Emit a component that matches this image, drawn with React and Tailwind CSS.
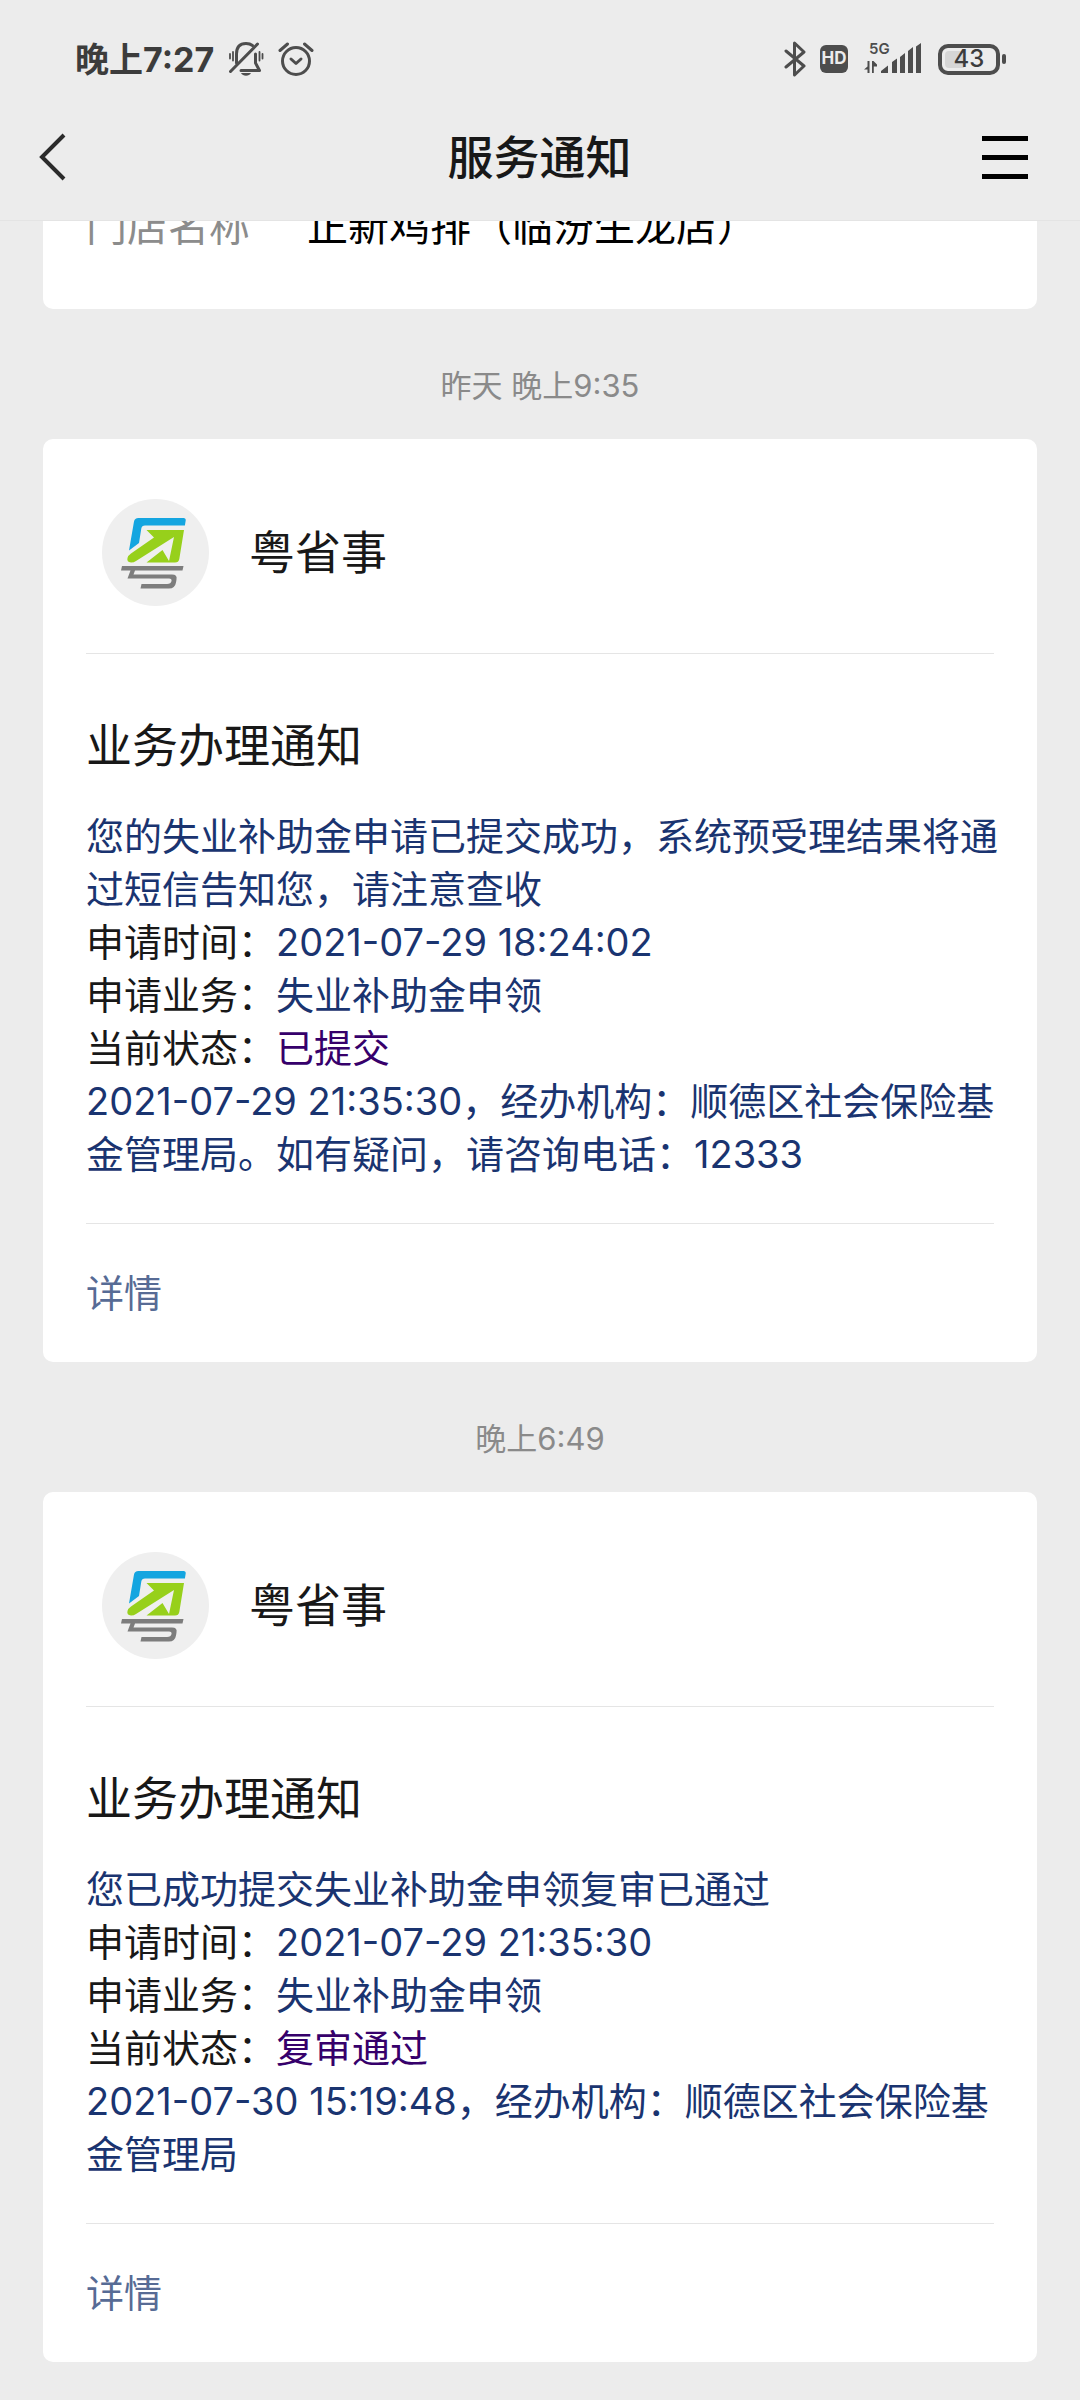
const notices = [
  {
    id: 'submitted',
    time: '昨天 晚上9:35',
    lead: '您的失业补助金申请已提交成功，系统预受理结果将通过短信告知您，请注意查收',
    appliedAt: '2021-07-29 18:24:02',
    business: '失业补助金申领',
    status: '已提交',
    remark: '2021-07-29 21:35:30，经办机构：顺德区社会保险基金管理局。如有疑问，请咨询电话：12333',
  },
  {
    id: 'approved',
    time: '晚上6:49',
    lead: '您已成功提交失业补助金申领复审已通过',
    appliedAt: '2021-07-29 21:35:30',
    business: '失业补助金申领',
    status: '复审通过',
    remark: '2021-07-30 15:19:48，经办机构：顺德区社会保险基金管理局',
  },
];

function MutedBellIcon() {
  return (
    <svg viewBox="0 0 36 36" className="w-9 h-9" fill="none" stroke="#4d4d4d" strokeWidth="3" strokeLinecap="round">
      <path d="M8.500 22V13C8.500 6 12 2.500 18 2.500c3 0 5 .8 6.500 2" />
      <path d="M27.500 13v9l4 7.500H13" strokeLinejoin="round" />
      <path d="M13 32h10c-1 1.800-2.800 2.800-5 2.800s-4-1-5-2.800z" fill="#4d4d4d" stroke="none" />
      <path d="M2.500 30.500 29.500 3" />
      <path d="M2 13v4.500M5 11v8.500M31.500 11v8.500M34.500 13v4.500" strokeWidth="1.800" />
    </svg>
  );
}

function AlarmIcon() {
  return (
    <svg viewBox="0 0 36 36" className="w-9 h-9" fill="none" stroke="#4d4d4d" strokeWidth="3" strokeLinecap="round" strokeLinejoin="round">
      <circle cx="18" cy="20" r="13.500" />
      <path d="m13 18 5 4.500 5-4.500" />
      <path d="M2 9.500 9.500 3M34 9.500 26.500 3" />
    </svg>
  );
}

function BluetoothIcon() {
  return (
    <svg viewBox="0 0 22 36" className="w-[22px] h-9" fill="none" stroke="#4d4d4d" strokeWidth="3" strokeLinecap="round" strokeLinejoin="round">
      <path d="m2 10 18 15-9.500 9V2L20 11 2 26" />
    </svg>
  );
}

function SignalIcon() {
  return (
    <svg viewBox="0 -4 58 44" className="w-[58px] h-11" fill="#4d4d4d">
      <text x="5" y="13" fontSize="15" fontWeight="600" fontFamily="Inter, sans-serif">5G</text>
      <path d="M3.500 20h2v12h-2v-3.500L0 28.500l3.500-3zM8 20h1.500l3.500 3.500v2H9.800V32H8z" />
      <path d="M17 32v-2l7-5.500V32zM28 21l5-3.500V32h-5zM36 16l5-4v20h-5zM44 10l5-4v26h-5zM52 5.500 57 2v30h-5z" />
    </svg>
  );
}

function StatusBar() {
  return (
    <div className="flex items-center justify-between h-[118px] pl-[75px] pr-[74px]">
      <div className="flex items-center">
        <span className="text-[34px] font-bold text-[#3c3c3c] whitespace-nowrap">晚上7:27</span>
        <span className="ml-3.5"><MutedBellIcon /></span>
        <span className="ml-3.5"><AlarmIcon /></span>
      </div>
      <div className="flex items-center">
        <BluetoothIcon />
        <span className="ml-3.5 w-7 h-7 rounded-md bg-[#4d4d4d] text-[#ececec] text-[17px] font-bold flex items-center justify-center">HD</span>
        <span className="ml-4"><SignalIcon /></span>
        <span className="ml-4 w-[62px] h-[31px] rounded-[10px] border-4 border-[#4d4d4d] p-[3px] flex">
          <span className="w-full rounded-sm bg-linear-to-r from-[#d6d6d6] from-40% to-transparent to-40% flex items-center justify-center text-2xl font-medium text-[#3c3c3c]">43</span>
        </span>
        <span className="ml-0.5 w-1 h-2.5 rounded-sm bg-[#4d4d4d]" />
      </div>
    </div>
  );
}

function NavBar() {
  return (
    <div className="grid grid-cols-[1fr_auto_1fr] items-center h-[78px] pl-[39px] pr-[52px]">
      <button type="button" aria-label="返回" className="w-[46px]">
        <svg viewBox="0 0 28 48" className="w-7 h-12" fill="none" stroke="#2b2b2b" strokeWidth="4">
          <path d="M25 2 3 24l22 22" />
        </svg>
      </button>
      <h1 className="pl-3 text-[46px] leading-none font-medium text-[#181818]">服务通知</h1>
      <button type="button" aria-label="菜单" className="justify-self-end w-[46px] flex flex-col gap-3.5">
        <span className="h-[5px] bg-black" />
        <span className="h-[5px] bg-black" />
        <span className="h-[5px] bg-black" />
      </button>
    </div>
  );
}

function Logo() {
  return (
    <svg viewBox="0 0 107 107" className="w-[107px] h-[107px]">
      <circle cx="53.500" cy="53.500" r="53.500" fill="#efefef" />
      <path d="M27 51.500 32 22.500q.6-3.500 4.500-3.500H81.500q2.500 0 2.200 2.500l-.8 5H43q-3.200 0-3.700 3L37 44z" fill="#14a5e0" />
      <path d="M44.500 31H82L77.300 60q-.6 3.500-4.300 3.500H44.500L60.500 51 67 62l5-24L34 62q-2 1.500-5 1.500-4.500-.5-3.500-4.500.5-2.500 3.500-4.500L52 38.500z" fill="#97d01b" />
      <path d="M20 67h61.500l-1 4.500H33l-1.500 4H70q5.500 0 4.500 5l-.5 3q-1 6-7 6H38.500l1-4.500H65q4 0 4.500-3 .5-2.500-2.500-2.500H25.500l3-8H19z" fill="#7d7d7d" />
    </svg>
  );
}

function NoticeCard({ notice }) {
  return (
    <article className="bg-white rounded-[10px] px-[43px]">
      <header className="flex items-center gap-10 h-[215px] pl-4 pt-3 border-b border-[#e5e5e5]">
        <Logo />
        <h2 className="text-[46px] leading-none text-[#181818]">粤省事</h2>
      </header>

      <div className="pt-16 pb-[42px] border-b border-[#e5e5e5]">
        <h3 className="text-[46px] leading-[54px] text-[#181818]">业务办理通知</h3>
        <div className="mt-[38px] -mr-6 text-[38px] leading-[53px] text-[#1a3470]">
          <p>{notice.lead}</p>
          <p><span className="text-[#181818]">申请时间：</span>{notice.appliedAt}</p>
          <p><span className="text-[#181818]">申请业务：</span>{notice.business}</p>
          <p><span className="text-[#181818]">当前状态：</span><span className="text-[#36006b]">{notice.status}</span></p>
          <p>{notice.remark}</p>
        </div>
      </div>

      <a href="#detail" className="flex items-center h-[138px] text-[38px] text-[#576b95]">详情</a>
    </article>
  );
}

export default function App() {
  return (
    <div className="min-h-screen bg-[#ececec] font-[Inter,'Noto_Sans_CJK_SC',sans-serif]">
      <div className="h-[221px] border-b border-[#e4e4e4]">
        <StatusBar />
        <NavBar />
      </div>

      <main className="px-[43px] pb-10">
        {/* tail of the previous message, scrolled under the title bar */}
        <section className="h-[88px] overflow-hidden flex flex-col justify-end bg-white rounded-b-[10px] px-[43px] pb-14">
          <dl className="flex text-[41px] leading-[54px]">
            <dt className="w-[221px] shrink-0 text-[#8c8c8c]">门店名称</dt>
            <dd className="text-black whitespace-nowrap">正新鸡排（临汾生龙店）</dd>
          </dl>
        </section>

        {notices.map((notice) => (
          <section key={notice.id}>
            <p className="flex items-center justify-center h-[130px] pt-6 text-[31px] text-[#8a8a8a]">{notice.time}</p>
            <NoticeCard notice={notice} />
          </section>
        ))}
      </main>
    </div>
  );
}
